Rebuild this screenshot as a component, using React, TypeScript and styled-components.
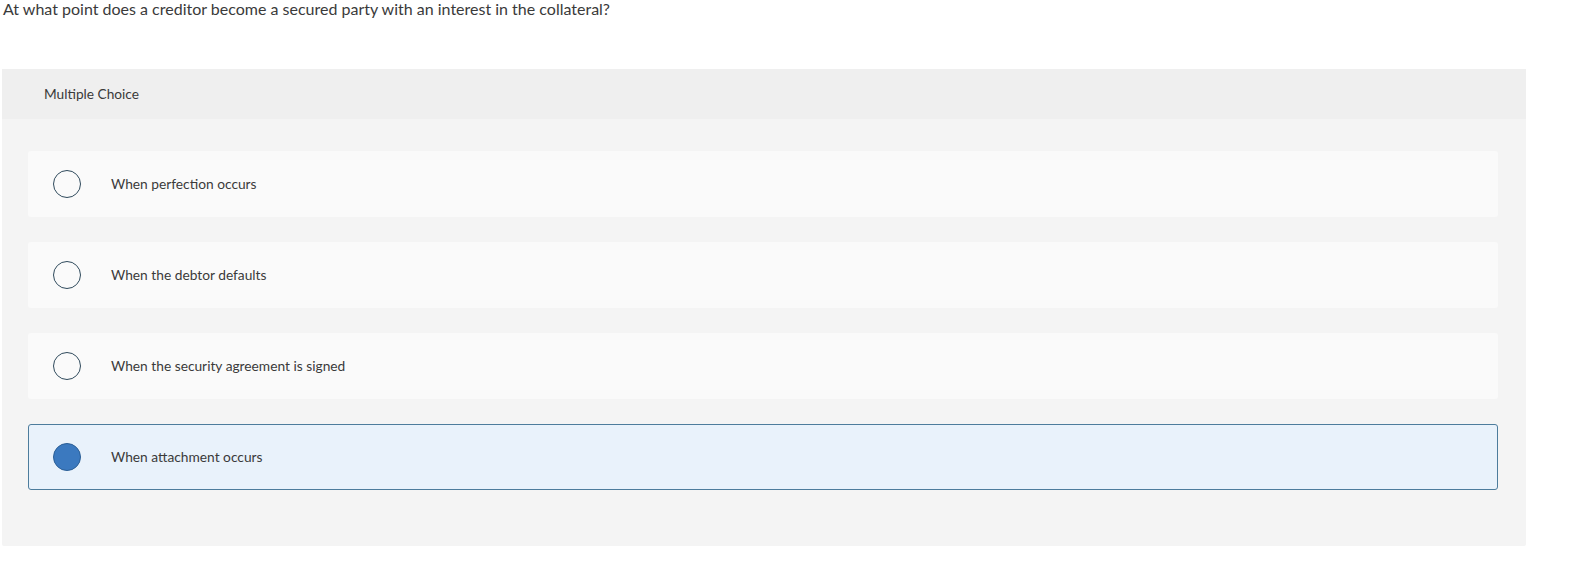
import styled, { createGlobalStyle } from 'styled-components';

const GlobalStyle = createGlobalStyle`
  body {
    margin: 0;
    background: #fff;
    font-family: Lato, "Open Sans", Arial, sans-serif;
    color: #333;
  }
`;

const options = [
  'When perfection occurs',
  'When the debtor defaults',
  'When the security agreement is signed',
  'When attachment occurs',
];

const selected = 3;

function App() {
  return (
    <Page>
      <GlobalStyle />
      <Question>
        At what point does a creditor become a secured party with an interest in the collateral?
      </Question>
      <Panel>
        <PanelHeader>Multiple Choice</PanelHeader>
        <OptionList>
          {options.map((text, index) => (
            <Option key={text} $active={index === selected}>
              <Radio $active={index === selected} />
              <OptionText>{text}</OptionText>
            </Option>
          ))}
        </OptionList>
      </Panel>
    </Page>
  );
}

export default App;

const Page = styled.div`
  width: 1570px;
  height: 577px;
  overflow: hidden;
`;

const Question = styled.div`
  font-size: 16px;
  line-height: 18px;
  padding-left: 3px;
  color: #3a3a3a;
`;

const Panel = styled.div`
  margin: 51px 0 0 2px;
  width: 1524px;
  background: #f4f4f4;
  border-radius: 2px;
`;

const PanelHeader = styled.div`
  height: 50px;
  display: flex;
  align-items: center;
  padding-left: 42px;
  padding-bottom: 1px;
  box-sizing: border-box;
  background: #efefef;
  font-size: 13.7px;
  color: #3a3a3a;
`;

const OptionList = styled.div`
  display: flex;
  flex-direction: column;
  gap: 25px;
  padding: 32px 28px 56px 26px;
`;

const Option = styled.div<{ $active: boolean }>`
  height: 66px;
  box-sizing: border-box;
  display: flex;
  align-items: center;
  padding-left: 24px;
  padding-bottom: 1px;
  border-radius: 3px;
  background: ${(p) => (p.$active ? '#e9f2fb' : '#fafafa')};
  border: 1px solid ${(p) => (p.$active ? '#4d7c9c' : 'transparent')};
`;

const Radio = styled.span<{ $active: boolean }>`
  width: 28px;
  height: 28px;
  box-sizing: border-box;
  border-radius: 50%;
  flex-shrink: 0;
  margin-top: 1px;
  border: 1.5px solid ${(p) => (p.$active ? '#2b5f96' : '#2f4a5c')};
  background: ${(p) => (p.$active ? '#3b79bf' : 'transparent')};
`;

const OptionText = styled.span`
  margin-left: 30px;
  font-size: 13.75px;
  color: #3a3a3a;
`;
